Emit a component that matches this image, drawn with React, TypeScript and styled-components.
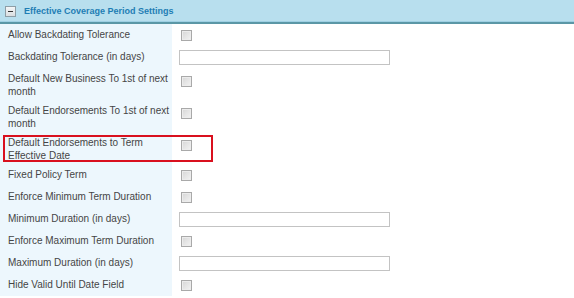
import React from "react";
import styled, { createGlobalStyle } from "styled-components";

const GlobalStyle = createGlobalStyle`
  html, body { margin: 0; padding: 0; background: #ffffff; }
  body { font-family: "Liberation Sans", Arial, sans-serif; }
`;

const Panel = styled.section`
  width: 574px;
  height: 298px;
  overflow: hidden;
  background: #ffffff;
`;

const Header = styled.div`
  height: 22px;
  display: flex;
  align-items: center;
  gap: 8px;
  padding-left: 5px;
  background: #b8dfee;
  border-bottom: 2px solid #5b97a6;
  box-shadow: inset 0 -1px 0 #9fd0e3;
`;

const ToggleIcon = styled.span`
  width: 9px;
  height: 9px;
  border: 1px solid #8e9ea6;
  background: linear-gradient(#f4f6f7, #d9dee1);
  display: flex;
  align-items: center;
  justify-content: center;
  &::after {
    content: "";
    width: 5px;
    height: 1px;
    background: #333;
  }
`;

const Title = styled.h2`
  margin: 0;
  font-size: 9px;
  font-weight: bold;
  color: #1e7db4;
`;

const Form = styled.div`
  display: grid;
  grid-template-columns: 172px 1fr;
`;

const Row = styled.div`
  display: contents;
`;

const Label = styled.label<{ $tall?: boolean }>`
  background: #edf7fd;
  height: ${(p) => (p.$tall ? 32 : 22)}px;
  box-sizing: border-box;
  padding: ${(p) => (p.$tall ? "5px" : "1px")} 2px 0 8px;
  display: flex;
  align-items: ${(p) => (p.$tall ? "flex-start" : "center")};
  font-size: 10px;
  line-height: 12.5px;
  color: #454545;
  position: relative;
`;

const Value = styled.div<{ $tall?: boolean }>`
  height: ${(p) => (p.$tall ? 32 : 22)}px;
  box-sizing: border-box;
  padding: ${(p) => (p.$tall ? "8px" : "1px")} 0 0 7px;
  display: flex;
  align-items: ${(p) => (p.$tall ? "flex-start" : "center")};
`;

const Check = styled.input.attrs({ type: "checkbox" })`
  appearance: none;
  -webkit-appearance: none;
  margin: 0 0 0 2px;
  width: 11px;
  height: 11px;
  box-sizing: border-box;
  border: 1px solid #a9a9a9;
  background: linear-gradient(135deg, #d6d6d6, #f3f3f3);
  box-shadow: inset 0 0 0 1px #ececec;
`;

const TextInput = styled.input.attrs({ type: "text" })`
  margin: 0;
  width: 211px;
  height: 15px;
  box-sizing: border-box;
  border: 1px solid #c3c3c3;
  background: #fff;
  padding: 0 2px;
  font-size: 10px;
`;

const Highlight = styled.span`
  position: absolute;
  left: 3px;
  top: 3px;
  width: 210px;
  height: 27px;
  box-sizing: border-box;
  border: 2px solid #d9101e;
  pointer-events: none;
`;

type Field = { label: string; kind: "check" | "text"; tall?: boolean; highlight?: boolean };

const fields: Field[] = [
  { label: "Allow Backdating Tolerance", kind: "check" },
  { label: "Backdating Tolerance (in days)", kind: "text" },
  { label: "Default New Business To 1st of next month", kind: "check", tall: true },
  { label: "Default Endorsements To 1st of next month", kind: "check", tall: true },
  { label: "Default Endorsements to Term Effective Date", kind: "check", tall: true, highlight: true },
  { label: "Fixed Policy Term", kind: "check" },
  { label: "Enforce Minimum Term Duration", kind: "check" },
  { label: "Minimum Duration (in days)", kind: "text" },
  { label: "Enforce Maximum Term Duration", kind: "check" },
  { label: "Maximum Duration (in days)", kind: "text" },
  { label: "Hide Valid Until Date Field", kind: "check" },
];

export default function App() {
  return (
    <>
      <GlobalStyle />
      <Panel>
        <Header>
          <ToggleIcon />
          <Title>Effective Coverage Period Settings</Title>
        </Header>
        <Form>
          {fields.map((f) => (
            <Row key={f.label}>
              <Label $tall={f.tall}>
                {f.label}
                {f.highlight && <Highlight />}
              </Label>
              <Value $tall={f.tall}>
                {f.kind === "check" ? <Check /> : <TextInput />}
              </Value>
            </Row>
          ))}
        </Form>
      </Panel>
    </>
  );
}
